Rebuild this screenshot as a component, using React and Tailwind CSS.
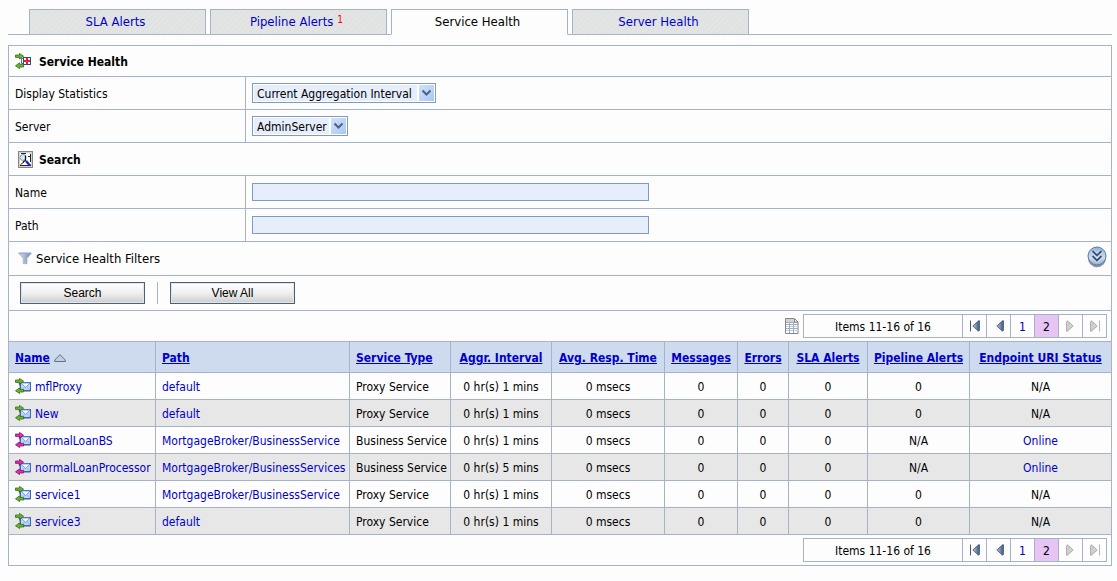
import { useState } from "react";

const tabs = [
  { label: "SLA Alerts" },
  { label: "Pipeline Alerts", count: 1 },
  { label: "Service Health", active: true },
  { label: "Server Health" },
];

const columns = [
  { label: "Name", width: "w-[146px]", left: true, sorted: true },
  { label: "Path", width: "w-[194px]", left: true },
  { label: "Service Type", width: "w-[101px]", left: true },
  { label: "Aggr. Interval", width: "w-[101px]" },
  { label: "Avg. Resp. Time", width: "w-[113px]" },
  { label: "Messages", width: "w-[73px]" },
  { label: "Errors", width: "w-[51px]" },
  { label: "SLA Alerts", width: "w-[79px]" },
  { label: "Pipeline Alerts", width: "w-[102px]" },
  { label: "Endpoint URI Status", width: "w-[142px]" },
];

const services = [
  { name: "mflProxy", path: "default", type: "Proxy Service", interval: "0 hr(s) 1 mins", pipeline: "0", status: "N/A" },
  { name: "New", path: "default", type: "Proxy Service", interval: "0 hr(s) 1 mins", pipeline: "0", status: "N/A" },
  { name: "normalLoanBS", path: "MortgageBroker/BusinessService", type: "Business Service", interval: "0 hr(s) 1 mins", pipeline: "N/A", status: "Online" },
  { name: "normalLoanProcessor", path: "MortgageBroker/BusinessServices", type: "Business Service", interval: "0 hr(s) 5 mins", pipeline: "N/A", status: "Online" },
  { name: "service1", path: "MortgageBroker/BusinessService", type: "Proxy Service", interval: "0 hr(s) 1 mins", pipeline: "0", status: "N/A" },
  { name: "service3", path: "default", type: "Proxy Service", interval: "0 hr(s) 1 mins", pipeline: "0", status: "N/A" },
];

export default function App() {
  const [form, setForm] = useState({
    statistics: "Current Aggregation Interval",
    server: "AdminServer",
    name: "",
    path: "",
  });
  const update = (key) => (e) => setForm({ ...form, [key]: e.target.value });

  return (
    <div className="min-h-screen bg-[#fdfdfd] pt-[9px] pr-[5px] pb-4 pl-2 font-['DejaVu_Sans_Condensed','DejaVu_Sans',sans-serif] text-[12px] leading-4 text-black">
      <nav className="flex gap-1 border-b border-[#a5b3c9] pl-[21px]">
        {tabs.map((tab) => (
          <Tab key={tab.label} {...tab} />
        ))}
      </nav>

      <main className="mt-[10px] border border-[#a5b3c9]">
        <form onSubmit={(e) => e.preventDefault()}>
          <Heading icon={<HealthIcon />} className="h-[31px] gap-2 pl-[6px]">
            Service Health
          </Heading>
          <FormRow id="statistics" label="Display Statistics">
            <Select
              id="statistics"
              className="w-[184px]"
              value={form.statistics}
              onChange={update("statistics")}
              options={["Current Aggregation Interval", "Since Last Reset"]}
            />
          </FormRow>
          <FormRow id="server" label="Server">
            <Select
              id="server"
              className="w-24"
              value={form.server}
              onChange={update("server")}
              options={["AdminServer", "Cluster"]}
            />
          </FormRow>
          <Heading icon={<SearchIcon />} className="h-[33px] gap-[6px] pl-[9px]">
            Search
          </Heading>
          <FormRow id="name" label="Name">
            <TextInput id="name" value={form.name} onChange={update("name")} />
          </FormRow>
          <FormRow id="path" label="Path">
            <TextInput id="path" value={form.path} onChange={update("path")} />
          </FormRow>
          <div className="flex h-[34px] items-center justify-between border-b border-[#a5b3c9] pr-1 pl-[9px]">
            <span className="flex items-center gap-1 text-[13px]">
              <FunnelIcon />
              Service Health Filters
            </span>
            <button type="button" aria-label="Show filters" className="pb-1">
              <ExpandIcon />
            </button>
          </div>
          <div className="flex h-[35px] items-center gap-3 border-b border-[#a5b3c9] pl-[11px]">
            <FormButton type="submit">Search</FormButton>
            <span className="h-[22px] w-px bg-[#a5b3c9]" />
            <FormButton type="reset">View All</FormButton>
          </div>
        </form>

        <div className="flex items-center justify-end gap-1 border-b border-[#a5b3c9] py-[3px] pr-1">
          <button type="button" aria-label="Customize table">
            <SheetIcon />
          </button>
          <Pager />
        </div>

        <table className="w-full table-fixed border-separate border-spacing-0 whitespace-nowrap">
          <thead>
            <tr className="h-[31px] bg-[#cedaed]">
              {columns.map((col) => (
                <th
                  key={col.label}
                  className={`border-b border-l border-[#a5b3c9] p-0 pt-0.5 first:border-l-0 ${col.width} ${
                    col.left ? "pl-[6px] text-left" : "text-center"
                  }`}
                >
                  <a href="#" className="text-[#0000cc] underline">
                    {col.label}
                  </a>
                  {col.sorted && <SortIcon />}
                </th>
              ))}
            </tr>
          </thead>
          <tbody>
            {services.map((service) => (
              <ServiceRow key={service.name} {...service} />
            ))}
          </tbody>
        </table>

        <div className="flex justify-end py-[3px] pr-1">
          <Pager />
        </div>
      </main>
    </div>
  );
}

function Tab({ label, count, active }) {
  return (
    <a
      href="#"
      className={`-mb-px flex h-[26px] w-[177px] items-center justify-center gap-1 border border-[#a5b3c9] pr-1 text-[13px] ${
        active
          ? "border-b-[#fdfdfd] bg-[#fdfdfd] text-black"
          : "bg-[repeating-linear-gradient(135deg,#e4e5e2_0_2px,#dfe2e2_2px_4px)] text-[#0000cc]"
      }`}
    >
      {label}
      {count && <span className="pb-1 text-[10px] leading-3 text-[#ff0000]">{count}</span>}
    </a>
  );
}

function Heading({ icon, className, children }) {
  return (
    <h2 className={`flex items-center border-b border-[#a5b3c9] font-bold ${className}`}>
      {icon}
      <span className="pt-0.5">{children}</span>
    </h2>
  );
}

function FormRow({ id, label, children }) {
  return (
    <div className="grid h-[33px] grid-cols-[236px_1fr] border-b border-[#a5b3c9]">
      <label htmlFor={id} className="flex items-center pt-0.5 pl-[6px]">
        {label}
      </label>
      <div className="flex items-center border-l border-[#a5b3c9] pl-[6px]">{children}</div>
    </div>
  );
}

function Select({ id, className, value, onChange, options }) {
  return (
    <span className={`relative block h-5 border border-[#7f9db9] bg-white p-px ${className}`}>
      <select
        id={id}
        value={value}
        onChange={onChange}
        className="block h-4 w-full appearance-none bg-[#e6edfb] pt-px pl-[3px] leading-4 outline-none"
      >
        {options.map((option) => (
          <option key={option}>{option}</option>
        ))}
      </select>
      <span className="pointer-events-none absolute inset-y-px right-px border-l-2 border-white bg-gradient-to-br from-[#d2e1fb] to-[#aac8f2]">
        <svg width="15" height="16" viewBox="0 0 15 16" fill="none" stroke="#4d6185" strokeWidth="2">
          <path d="M3.5 5.5l4 4 4-4" />
        </svg>
      </span>
    </span>
  );
}

function TextInput(props) {
  return (
    <input
      type="text"
      className="h-[18px] w-[397px] border border-[#7f9db9] bg-[#e6edfb] px-1 outline-none"
      {...props}
    />
  );
}

function FormButton({ children, type }) {
  return (
    <button
      type={type}
      className="h-[22px] w-[125px] border border-[#466080] bg-gradient-to-b from-white via-[#f0f0f0] to-[#cdcdcd] font-['Liberation_Sans',Arial,sans-serif] shadow-[inset_0_0_0_1px_#e6e6e0]"
    >
      {children}
    </button>
  );
}

function Pager() {
  return (
    <div className="flex h-6 divide-x divide-[#a5b3c9] border border-[#a5b3c9]">
      <span className="flex w-[159px] items-center justify-center pt-0.5">Items 11-16 of 16</span>
      <PageButton label="First page">
        <ArrowIcon bar />
      </PageButton>
      <PageButton label="Previous page">
        <ArrowIcon />
      </PageButton>
      <PageButton>
        <span className="pt-0.5">1</span>
      </PageButton>
      <PageButton current>
        <span className="pt-0.5">2</span>
      </PageButton>
      <PageButton label="Next page" disabled>
        <ArrowIcon next />
      </PageButton>
      <PageButton label="Last page" disabled>
        <ArrowIcon next bar />
      </PageButton>
    </div>
  );
}

function PageButton({ label, current, disabled, children }) {
  return (
    <button
      type="button"
      aria-label={label}
      disabled={disabled}
      className={`flex w-6 items-center justify-center last:w-[23px] ${
        current ? "bg-[#e6c4f3] text-black" : "text-[#0000cc]"
      }`}
    >
      {children}
    </button>
  );
}

function ServiceRow({ name, path, type, interval, pipeline, status }) {
  const cell = "border-b border-l border-[#a5b3c9] p-0 pt-0.5";
  return (
    <tr className="h-[27px] text-center even:bg-[#e7e7e7]">
      <td className="border-b border-[#a5b3c9] p-0 pl-[6px]">
        <a href="#" className="flex items-center gap-1 text-[#0000cc]">
          <ServiceIcon business={type === "Business Service"} />
          <span className="pt-0.5">{name}</span>
        </a>
      </td>
      <td className={`${cell} pl-[6px] text-left`}>
        <a href="#" className="text-[#0000cc]">{path}</a>
      </td>
      <td className={`${cell} pl-[6px] text-left`}>{type}</td>
      <td className={cell}>{interval}</td>
      <td className={cell}>0 msecs</td>
      <td className={cell}>0</td>
      <td className={cell}>0</td>
      <td className={cell}>0</td>
      <td className={cell}>{pipeline}</td>
      <td className={cell}>
        {status === "Online" ? <a href="#" className="text-[#0000cc]">{status}</a> : status}
      </td>
    </tr>
  );
}

// the two opposing arrows shared by the service icons
function Arrows({ fill, stroke }) {
  return (
    <g fill={fill} stroke={stroke} strokeWidth="0.8">
      <path d="M0.5 2h4V0.4L8.6 3.2 4.5 6V4.4h-4z" />
      <path d="M8.6 11.4h-4V9.8L0.5 12.8l4.1 2.8V14h4z" />
    </g>
  );
}

function ServiceIcon({ business }) {
  return (
    <svg width="16" height="16" viewBox="0 0 16 16" className="shrink-0">
      <path d="M3.5 5h4v6h-2z" fill="#52677a" />
      <path d="M6.5 13.5h9" stroke="#9aa5b5" />
      <rect x="5.5" y="4.5" width="10" height="8" fill="#b9d5f8" stroke="#3f66b5" />
      <path d="M7 12l3-3.5M15 12l-3-3.5" stroke="#8fb0e0" strokeWidth="0.8" fill="none" />
      <path d="M6 5l4.7 4.5L15 5z" stroke="#6a90cf" strokeWidth="0.8" fill="#f2f8ff" />
      <Arrows fill={business ? "#e02cae" : "#6cb52d"} stroke={business ? "#861566" : "#356b17"} />
    </svg>
  );
}

function HealthIcon() {
  return (
    <svg width="16" height="16" viewBox="0 0 16 16">
      <path d="M9 5.5H6.5v5H9" fill="none" stroke="#4a68b0" />
      <rect x="8.5" y="4.5" width="7" height="7" fill="#fff" stroke="#31479b" />
      <path d="M12 5v6M9 8h6" stroke="#ee2030" strokeWidth="2" />
      <Arrows fill="#6cb52d" stroke="#356b17" />
    </svg>
  );
}

function SearchIcon() {
  return (
    <svg width="15" height="17" viewBox="0 0 15 17" className="shrink-0">
      <rect x="0.5" y="0.5" width="14" height="16" fill="#d4d4d4" stroke="#858585" />
      <path d="M2 2h9l2 2v11H2z" fill="#fff" />
      <path d="M2 14.5h11M3 2.5h5M12.5 3v8M10 5.5h2M2.5 13.5L6 11" fill="none" stroke="#222" />
      <circle cx="5" cy="6.5" r="2.9" fill="#d6f0fa" stroke="#8a98a8" />
      <path d="M7.5 4.5v5L5 11" fill="none" stroke="#111" strokeWidth="1.2" />
      <path d="M8 10l4 4.5" stroke="#1724d0" strokeWidth="2.4" />
    </svg>
  );
}

function FunnelIcon() {
  return (
    <svg width="14" height="13" viewBox="0 0 14 13">
      <defs>
        <linearGradient id="funnel">
          <stop offset="0" stopColor="#dbe4f2" />
          <stop offset="1" stopColor="#6f86b3" />
        </linearGradient>
      </defs>
      <path d="M0.5 1h13L9 6.5v5.2H5.2V6.5z" fill="url(#funnel)" stroke="#9aaac8" strokeWidth="0.6" />
      <path d="M1 1.2h12" stroke="#93a3c4" />
    </svg>
  );
}

function ExpandIcon() {
  return (
    <svg width="20" height="22" viewBox="0 0 20 22" fill="none">
      <defs>
        <linearGradient id="expand" x2="0" y2="1">
          <stop offset="0" stopColor="#8fb0d6" />
          <stop offset="0.6" stopColor="#c9dcf0" />
          <stop offset="1" stopColor="#8fadd0" />
        </linearGradient>
      </defs>
      <ellipse cx="10" cy="12" rx="9" ry="9.3" fill="#8c929b" />
      <circle cx="10" cy="10" r="9" fill="url(#expand)" stroke="#5f7ca3" />
      <path d="M5.5 5l4.5 4.5L14.5 5M5.5 10l4.5 4.5 4.5-4.5" stroke="#fff" strokeWidth="4" opacity="0.4" />
      <path d="M5.5 5l4.5 4.5L14.5 5M5.5 10l4.5 4.5 4.5-4.5" stroke="#35507a" strokeWidth="1.8" />
    </svg>
  );
}

function SheetIcon() {
  return (
    <svg width="14" height="16" viewBox="0 0 14 16" fill="none">
      <path d="M0.5 0.5h9L13 4v11.5H0.5z" fill="#fff" stroke="#858585" />
      <path d="M1 1h8v3H1z" fill="#d2d2d2" />
      <path d="M1 8.5h12M1 12.5h12" stroke="#b9d2ee" />
      <path d="M1 4.5h12M1 6.5h12M1 10.5h12M4.5 4v11M8.5 4v11" stroke="#a3adb9" />
      <path d="M9.5 1v3H13" stroke="#858585" />
    </svg>
  );
}

function SortIcon() {
  return (
    <svg width="12" height="8" viewBox="0 0 12 8" className="ml-1 inline-block align-baseline">
      <path d="M6 0.7L11.3 6v1.5H0.7V6z" fill="#c3cddb" stroke="#52657e" strokeWidth="0.9" />
    </svg>
  );
}

function ArrowIcon({ next, bar }) {
  return (
    <svg width="12" height="12" viewBox="0 0 12 12" className={next ? "rotate-180" : ""}>
      <defs>
        <linearGradient id="arrow-on">
          <stop offset="0" stopColor="#b4c5da" />
          <stop offset="1" stopColor="#3d5880" />
        </linearGradient>
      </defs>
      {bar && <path d="M1.5 0.5v11" stroke={next ? "#b4b4b4" : "#44597a"} />}
      <path
        d="M10.5 0.8v9.4l-1 1.1L3.800 6l5.700-5.200z"
        fill={next ? "#cfcfcf" : "url(#arrow-on)"}
        stroke={next ? "#aaa" : "#4f6481"}
        strokeWidth="0.9"
      />
    </svg>
  );
}
